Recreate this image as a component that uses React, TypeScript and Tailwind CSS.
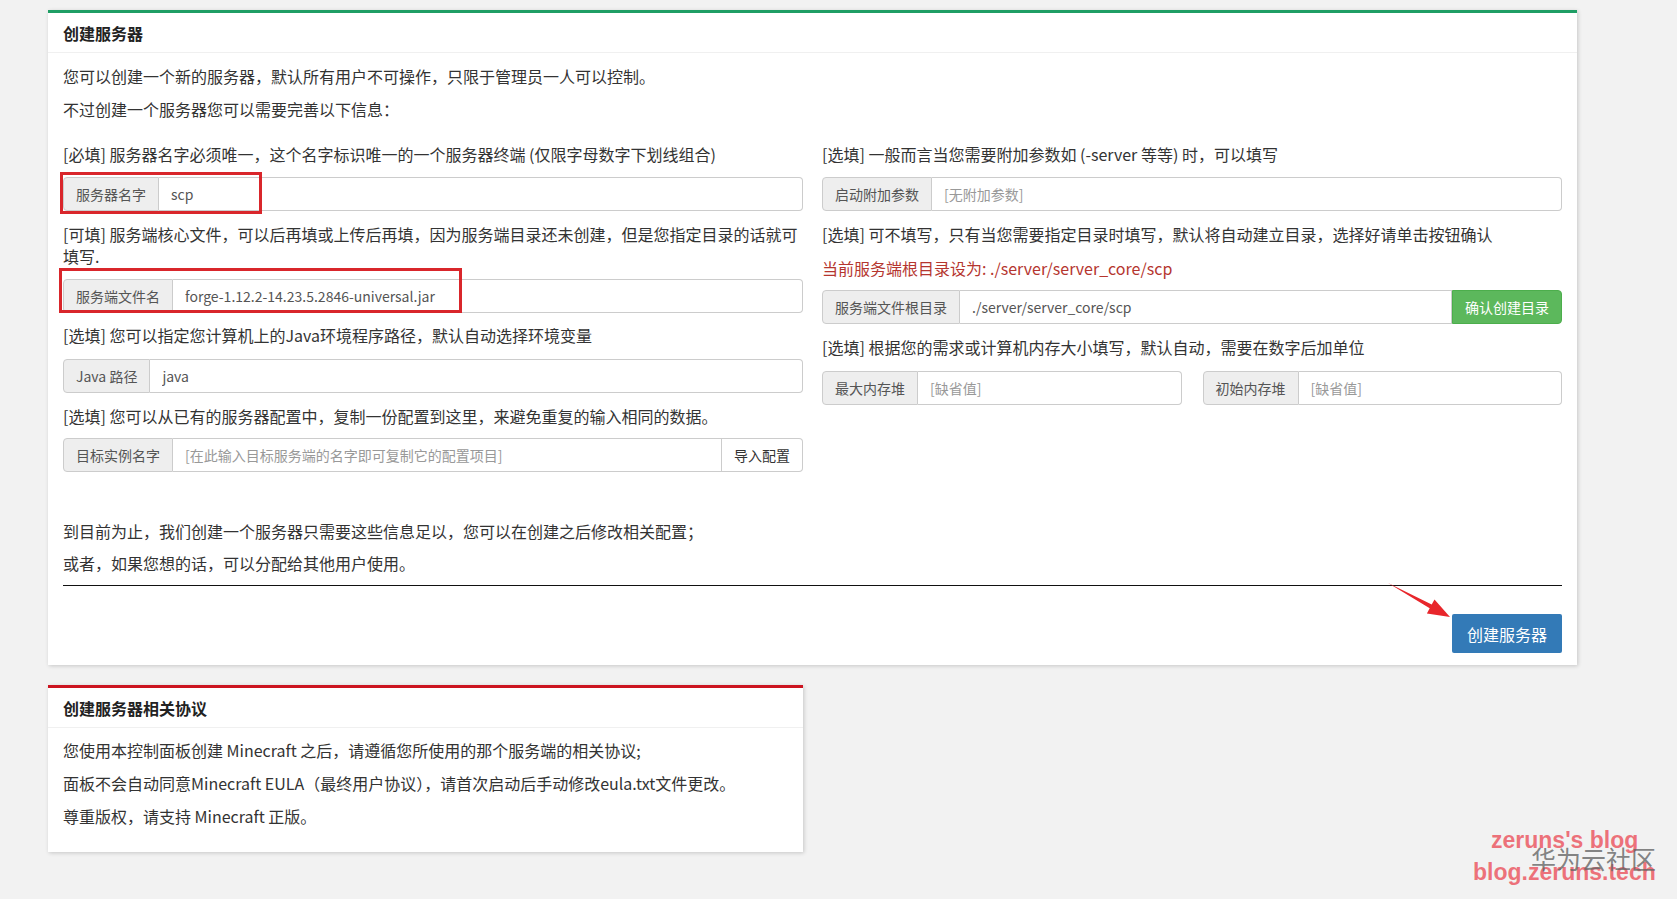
import React from "react";

type IGProps = {
  label: string;
  value?: string;
  placeholder?: string;
  button?: string;
  buttonKind?: "green" | "default";
};

function InputGroup({ label, value, placeholder, button, buttonKind }: IGProps) {
  return (
    <div className="flex h-[34px] w-full">
      <span className="flex items-center whitespace-nowrap rounded-l-[4px] border border-[#ccc] bg-[#eee] px-3 text-[14px] text-[#555]">
        {label}
      </span>
      <input
        className={
          "min-w-0 flex-1 border border-l-0 border-[#ccc] bg-white px-3 text-[14px] text-[#555] outline-none placeholder:text-[#999] " +
          (button ? "" : "rounded-r-[4px]")
        }
        defaultValue={value}
        placeholder={placeholder}
      />
      {button ? (
        buttonKind === "green" ? (
          <button className="flex items-center whitespace-nowrap rounded-r-[4px] border border-[#4cae4c] bg-[#5cb85c] px-3 text-[14px] text-white">
            {button}
          </button>
        ) : (
          <button className="flex items-center whitespace-nowrap rounded-r-[4px] border border-l-0 border-[#ccc] bg-white px-3 text-[14px] text-[#333]">
            {button}
          </button>
        )
      ) : null}
    </div>
  );
}

function Label({ children, className = "" }: { children: React.ReactNode; className?: string }) {
  return <div className={"text-[16px] leading-[22px] " + className}>{children}</div>;
}

export default function App() {
  return (
    <div className="relative min-h-[899px] w-[1677px] bg-[#f2f2f2] pl-[48px] pt-[10px] font-['Noto_Sans_CJK_SC',sans-serif] text-[#333]">
      {/* Card 1 */}
      <div className="w-[1529px] border-t-[3px] border-[#1f9e65] bg-white shadow-[1px_1px_4px_rgba(0,0,0,0.18)]">
        <div className="flex h-[40px] items-center border-b border-[#f0f0f0] px-[15px]">
          <h3 className="text-[16px] font-bold text-[#222]">创建服务器</h3>
        </div>
        <div className="px-[15px] pb-[12px] pt-[12px]">
          <p className="mb-[11px] text-[16px] leading-[22px]">
            您可以创建一个新的服务器，默认所有用户不可操作，只限于管理员一人可以控制。
          </p>
          <p className="mb-[23px] text-[16px] leading-[22px]">不过创建一个服务器您可以需要完善以下信息：</p>

          <div className="grid grid-cols-2 gap-x-[19px]">
            {/* left column */}
            <div>
              <Label className="mb-[12px]">[必填] 服务器名字必须唯一，这个名字标识唯一的一个服务器终端 (仅限字母数字下划线组合)</Label>
              <div className="relative mb-[12px]">
                <InputGroup label="服务器名字" value="scp" />
                <div className="pointer-events-none absolute left-[-3px] top-[-5px] h-[42px] w-[202px] border-[3px] border-[#d9262b]" />
              </div>
              <Label className="mb-[12px]">
                [可填] 服务端核心文件，可以后再填或上传后再填，因为服务端目录还未创建，但是您指定目录的话就可填写.
              </Label>
              <div className="relative mb-[11px]">
                <InputGroup label="服务端文件名" value="forge-1.12.2-14.23.5.2846-universal.jar" />
                <div className="pointer-events-none absolute left-[-4px] top-[-11px] h-[45px] w-[403px] border-[3px] border-[#d9262b]" />
              </div>
              <Label className="mb-[13px]">[选填] 您可以指定您计算机上的Java环境程序路径，默认自动选择环境变量</Label>
              <div className="mb-[12px]">
                <InputGroup label="Java 路径" value="java" />
              </div>
              <Label className="mb-[11px]">[选填] 您可以从已有的服务器配置中，复制一份配置到这里，来避免重复的输入相同的数据。</Label>
              <InputGroup
                label="目标实例名字"
                placeholder="[在此输入目标服务端的名字即可复制它的配置项目]"
                button="导入配置"
              />
            </div>

            {/* right column */}
            <div>
              <Label className="mb-[12px]">[选填] 一般而言当您需要附加参数如 (-server 等等) 时，可以填写</Label>
              <div className="mb-[12px]">
                <InputGroup label="启动附加参数" placeholder="[无附加参数]" />
              </div>
              <Label className="mb-[12px]">[选填] 可不填写，只有当您需要指定目录时填写，默认将自动建立目录，选择好请单击按钮确认</Label>
              <Label className="mb-[11px] text-[#b5362f]">当前服务端根目录设为: ./server/server_core/scp</Label>
              <div className="mb-[12px]">
                <InputGroup
                  label="服务端文件根目录"
                  value="./server/server_core/scp"
                  button="确认创建目录"
                  buttonKind="green"
                />
              </div>
              <Label className="mb-[13px]">[选填] 根据您的需求或计算机内存大小填写，默认自动，需要在数字后加单位</Label>
              <div className="grid grid-cols-2 gap-x-[21px]">
                <InputGroup label="最大内存堆" placeholder="[缺省值]" />
                <InputGroup label="初始内存堆" placeholder="[缺省值]" />
              </div>
            </div>
          </div>

          <p className="mb-[10px] mt-[48px] text-[16px] leading-[22px]">
            到目前为止，我们创建一个服务器只需要这些信息足以，您可以在创建之后修改相关配置；
          </p>
          <p className="text-[16px] leading-[22px]">或者，如果您想的话，可以分配给其他用户使用。</p>
          <div className="mt-[11px] h-px bg-[#111]" />
          <div className="mt-[28px] flex justify-end">
            <button className="h-[39px] rounded-[2px] bg-[#337ab7] px-[15px] text-[16px] text-white">创建服务器</button>
          </div>
        </div>
      </div>

      {/* Card 2 */}
      <div className="mt-[20px] w-[755px] border-t-[3px] border-[#cc1420] bg-white shadow-[1px_1px_4px_rgba(0,0,0,0.18)]">
        <div className="flex h-[40px] items-center border-b border-[#f0f0f0] px-[15px]">
          <h3 className="text-[16px] font-bold text-[#222]">创建服务器相关协议</h3>
        </div>
        <div className="px-[15px] pb-[14px] pt-[11px]">
          <p className="mb-[11px] text-[16px] leading-[22px]">
            您使用本控制面板创建 Minecraft 之后，请遵循您所使用的那个服务端的相关协议;
          </p>
          <p className="mb-[11px] text-[16px] leading-[22px]">
            面板不会自动同意Minecraft EULA（最终用户协议），请首次启动后手动修改eula.txt文件更改。
          </p>
          <p className="mb-[11px] text-[16px] leading-[22px]">尊重版权，请支持 Minecraft 正版。</p>
        </div>
      </div>

      {/* red arrow annotation */}
      <svg className="pointer-events-none absolute left-[1380px] top-[575px]" width="80" height="50" viewBox="0 0 80 50">
        <polygon
          points="8,8 51.7,29.6 54.5,24.4 70,42 46.9,38.4 49.7,33.2"
          fill="#e8262b"
        />
      </svg>

      {/* watermark */}
      <div className="pointer-events-none absolute left-[1491px] top-[828px] whitespace-nowrap font-['Liberation_Sans',sans-serif] text-[23px] font-bold leading-[24px] text-[rgba(236,90,100,0.85)]">
        zeruns's blog
      </div>
      <div className="pointer-events-none absolute left-[1473px] top-[860px] whitespace-nowrap font-['Liberation_Sans',sans-serif] text-[23px] font-bold leading-[24px] text-[rgba(236,90,100,0.85)]">
        blog.zeruns.tech
      </div>
      <div className="pointer-events-none absolute left-[1531px] top-[845px] whitespace-nowrap font-['Noto_Sans_CJK_SC',sans-serif] text-[25px] leading-[26px] text-[rgba(100,100,100,0.8)]">
        华为云社区
      </div>
    </div>
  );
}
